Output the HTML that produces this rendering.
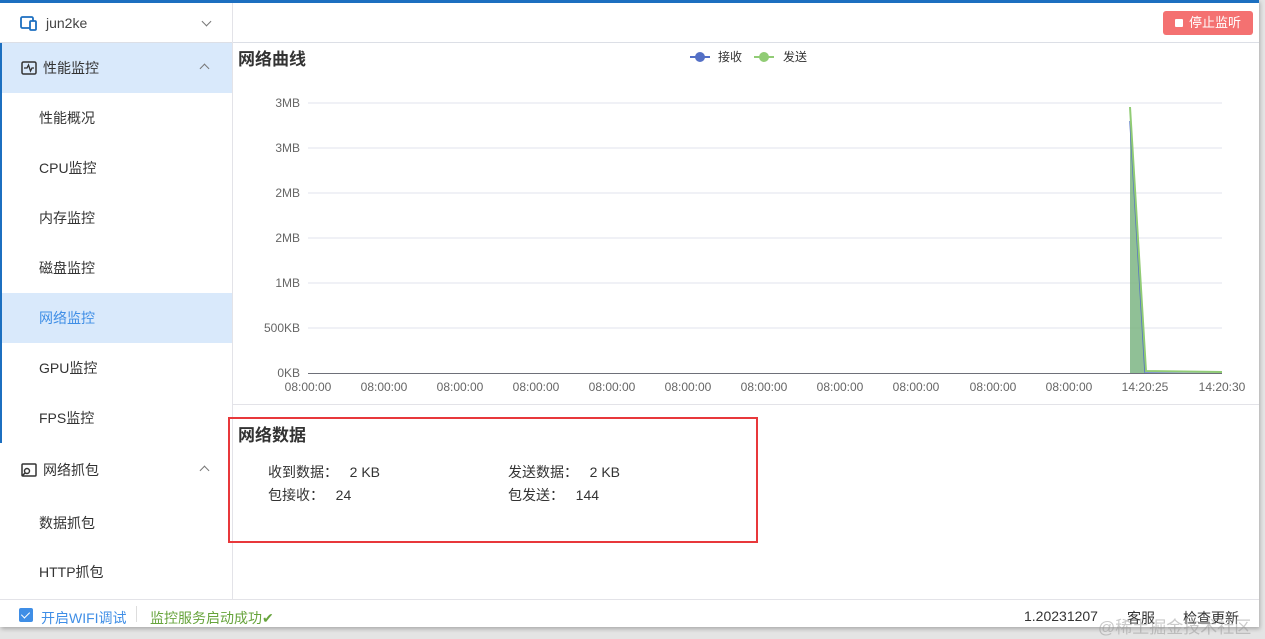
<!DOCTYPE html>
<html><head><meta charset="utf-8"><style>
*{margin:0;padding:0;box-sizing:border-box}
body{width:1265px;height:639px;background:#e4e4e4;font-family:"Liberation Sans","Noto Sans CJK SC",sans-serif;position:relative;overflow:hidden;color:#333}
.win{position:absolute;left:0;top:0;width:1259px;height:627px;background:#fff;border-top:3px solid #1c6fc0;box-shadow:1px 2px 4px rgba(0,0,0,.25)}
.side{position:absolute;left:0;top:0;width:233px;height:596px;border-right:1px solid #e3e3e8}
.dev{height:40px;border-bottom:1px solid #dcdfe6;display:flex;align-items:center;padding-left:20px;font-size:14px;color:#444}
.blk{border-left:2px solid #1c6fc0}
.grp{height:50px;display:flex;align-items:center;padding-left:19px;font-size:14px;color:#333;position:relative}
.grp .ar{position:absolute;right:24px;top:22px;width:7px;height:7px;border-left:1px solid #777;border-top:1px solid #777;transform:rotate(45deg)}
.it{height:50px;line-height:50px;padding-left:37px;font-size:14px;color:#333}
.act{background:#d9e9fb}
.foot{position:absolute;left:0;top:596px;width:1259px;height:28px;border-top:1px solid #e3e3e8;font-size:14px}
.main{position:absolute;left:233px;top:0;right:0;height:596px}
.btn{position:absolute;right:6px;top:8px;width:90px;height:24px;background:#f47171;border-radius:3px;color:#fff;font-size:13px;line-height:24px;padding-left:26px}
.btn:before{content:"";position:absolute;left:12px;top:8px;width:8px;height:8px;background:#fff;border-radius:1px}
h3{position:absolute;font-size:17px;font-weight:bold;color:#333}
.lbl{position:absolute;font-size:14px;color:#333}
</style></head><body>
<div class="win">
<div class="side">
 <div class="dev"><svg width="18" height="16" viewBox="0 0 18 16" style="margin-right:8px"><rect x="1" y="2" width="12" height="11" rx="1.5" fill="none" stroke="#1c6fc0" stroke-width="1.8"/><rect x="10" y="6" width="6" height="9" rx="1" fill="#fff" stroke="#1c6fc0" stroke-width="1.8"/></svg>jun2ke<span style="position:absolute;left:203px;top:15px;width:7px;height:7px;border-right:1px solid #777;border-bottom:1px solid #777;transform:rotate(45deg)"></span></div>
 <div class="blk">
 <div class="grp act"><svg width="16" height="14" viewBox="0 0 16 14" style="margin-right:6px"><rect x="1" y="1" width="14" height="12" rx="1.5" fill="none" stroke="#333" stroke-width="1.5"/><path d="M3 7h3l1.5-3 2 6 1.5-3h2" fill="none" stroke="#333" stroke-width="1.3"/></svg>性能监控<span class="ar"></span></div>
 <div class="it">性能概况</div><div class="it">CPU监控</div><div class="it">内存监控</div><div class="it">磁盘监控</div>
 <div class="it act" style="color:#3f8ee6">网络监控</div><div class="it">GPU监控</div><div class="it">FPS监控</div>
 </div>
 <div class="grp" style="margin-top:2px;padding-left:21px"><svg width="16" height="14" viewBox="0 0 16 14" style="margin-right:6px"><rect x="1" y="1" width="14" height="12" rx="1" fill="none" stroke="#333" stroke-width="1.5"/><circle cx="6" cy="8" r="2.5" fill="#fff" stroke="#333" stroke-width="1.4"/><path d="M4 10l-3 3" stroke="#333" stroke-width="1.5"/></svg>网络抓包<span class="ar"></span></div>
 <div class="it" style="height:52px;line-height:56px;padding-left:39px">数据抓包</div><div class="it" style="padding-left:39px">HTTP抓包</div>
</div>
<div class="main">
 <div style="position:absolute;left:0;right:0;top:39px;border-top:1px solid #dcdfe6"></div>
 <div class="btn">停止监听</div>
 <h3 style="left:5px;top:42px">网络曲线</h3>
 <h3 style="left:5px;top:418px">网络数据</h3>
 <div style="position:absolute;left:0;right:0;top:401px;border-top:1px solid #e3e3e8"></div>
</div>
<svg style="position:absolute;left:0;top:-3px" width="1259" height="400" font-family="Liberation Sans" font-size="12" fill="#666">
 <g stroke="#e0e3ec"><line x1="308" x2="1222" y1="103" y2="103"/><line x1="308" x2="1222" y1="148" y2="148"/><line x1="308" x2="1222" y1="193" y2="193"/><line x1="308" x2="1222" y1="238" y2="238"/><line x1="308" x2="1222" y1="283" y2="283"/><line x1="308" x2="1222" y1="328" y2="328"/></g>
 <line x1="308" x2="1222" y1="373.5" y2="373.5" stroke="#6e7079"/>
 <g text-anchor="end"><text x="300" y="107">3MB</text><text x="300" y="152">3MB</text><text x="300" y="197">2MB</text><text x="300" y="242">2MB</text><text x="300" y="287">1MB</text><text x="300" y="332">500KB</text><text x="300" y="377">0KB</text></g>
 <g text-anchor="middle"><text x="308" y="391">08:00:00</text><text x="384" y="391">08:00:00</text><text x="460" y="391">08:00:00</text><text x="536" y="391">08:00:00</text><text x="612" y="391">08:00:00</text><text x="688" y="391">08:00:00</text><text x="764" y="391">08:00:00</text><text x="840" y="391">08:00:00</text><text x="916" y="391">08:00:00</text><text x="993" y="391">08:00:00</text><text x="1069" y="391">08:00:00</text><text x="1145" y="391">14:20:25</text><text x="1222" y="391">14:20:30</text></g>
 <polygon points="1130,107 1145,373 1130,373" fill="#7db584" opacity=".85"/>
 <polyline points="1130,121 1145,372 1222,372" fill="none" stroke="#5470c6" stroke-width="1.5"/>
 <polyline points="1130,107 1146,371 1222,372" fill="none" stroke="#91cc75" stroke-width="2"/>
 <line x1="690" x2="710" y1="57" y2="57" stroke="#5470c6" stroke-width="2"/><circle cx="700" cy="57" r="5" fill="#5470c6"/><text x="718" y="61" fill="#333">接收</text>
 <line x1="754" x2="774" y1="57" y2="57" stroke="#91cc75" stroke-width="2"/><circle cx="764" cy="57" r="5" fill="#91cc75"/><text x="783" y="61" fill="#333">发送</text>
</svg>
<div class="lbl" style="left:268px;top:459px">收到数据：&nbsp;&nbsp;&nbsp;2 KB</div>
<div class="lbl" style="left:508px;top:459px">发送数据：&nbsp;&nbsp;&nbsp;2 KB</div>
<div class="lbl" style="left:268px;top:482px">包接收：&nbsp;&nbsp;&nbsp;24</div>
<div class="lbl" style="left:508px;top:482px">包发送：&nbsp;&nbsp;&nbsp;144</div>
<div style="position:absolute;left:228px;top:414px;width:530px;height:126px;border:2px solid #e8383b"></div>
<div class="foot">
 <span style="position:absolute;left:19px;top:8px;width:14px;height:14px;background:#3f8ee6;border-radius:2px"></span><span style="position:absolute;left:23px;top:10px;width:5px;height:8px;border-right:1.5px solid #fff;border-bottom:1.5px solid #fff;transform:rotate(45deg)"></span>
 <span style="position:absolute;left:41px;top:8px;color:#3f8ee6">开启WIFI调试</span>
 <span style="position:absolute;left:136px;top:6px;height:16px;border-left:1px solid #ddd"></span>
 <span style="position:absolute;left:150px;top:8px;color:#67a43c">监控服务启动成功✔</span>
 <span style="position:absolute;left:1024px;top:8px">1.20231207</span>
 <span style="position:absolute;left:1127px;top:8px">客服</span>
 <span style="position:absolute;left:1183px;top:8px">检查更新</span>
</div>
</div>
<div style="position:absolute;left:1098px;top:613px;font-size:17px;color:rgba(150,150,150,.5)">@稀土掘金技术社区</div>
</body></html>
